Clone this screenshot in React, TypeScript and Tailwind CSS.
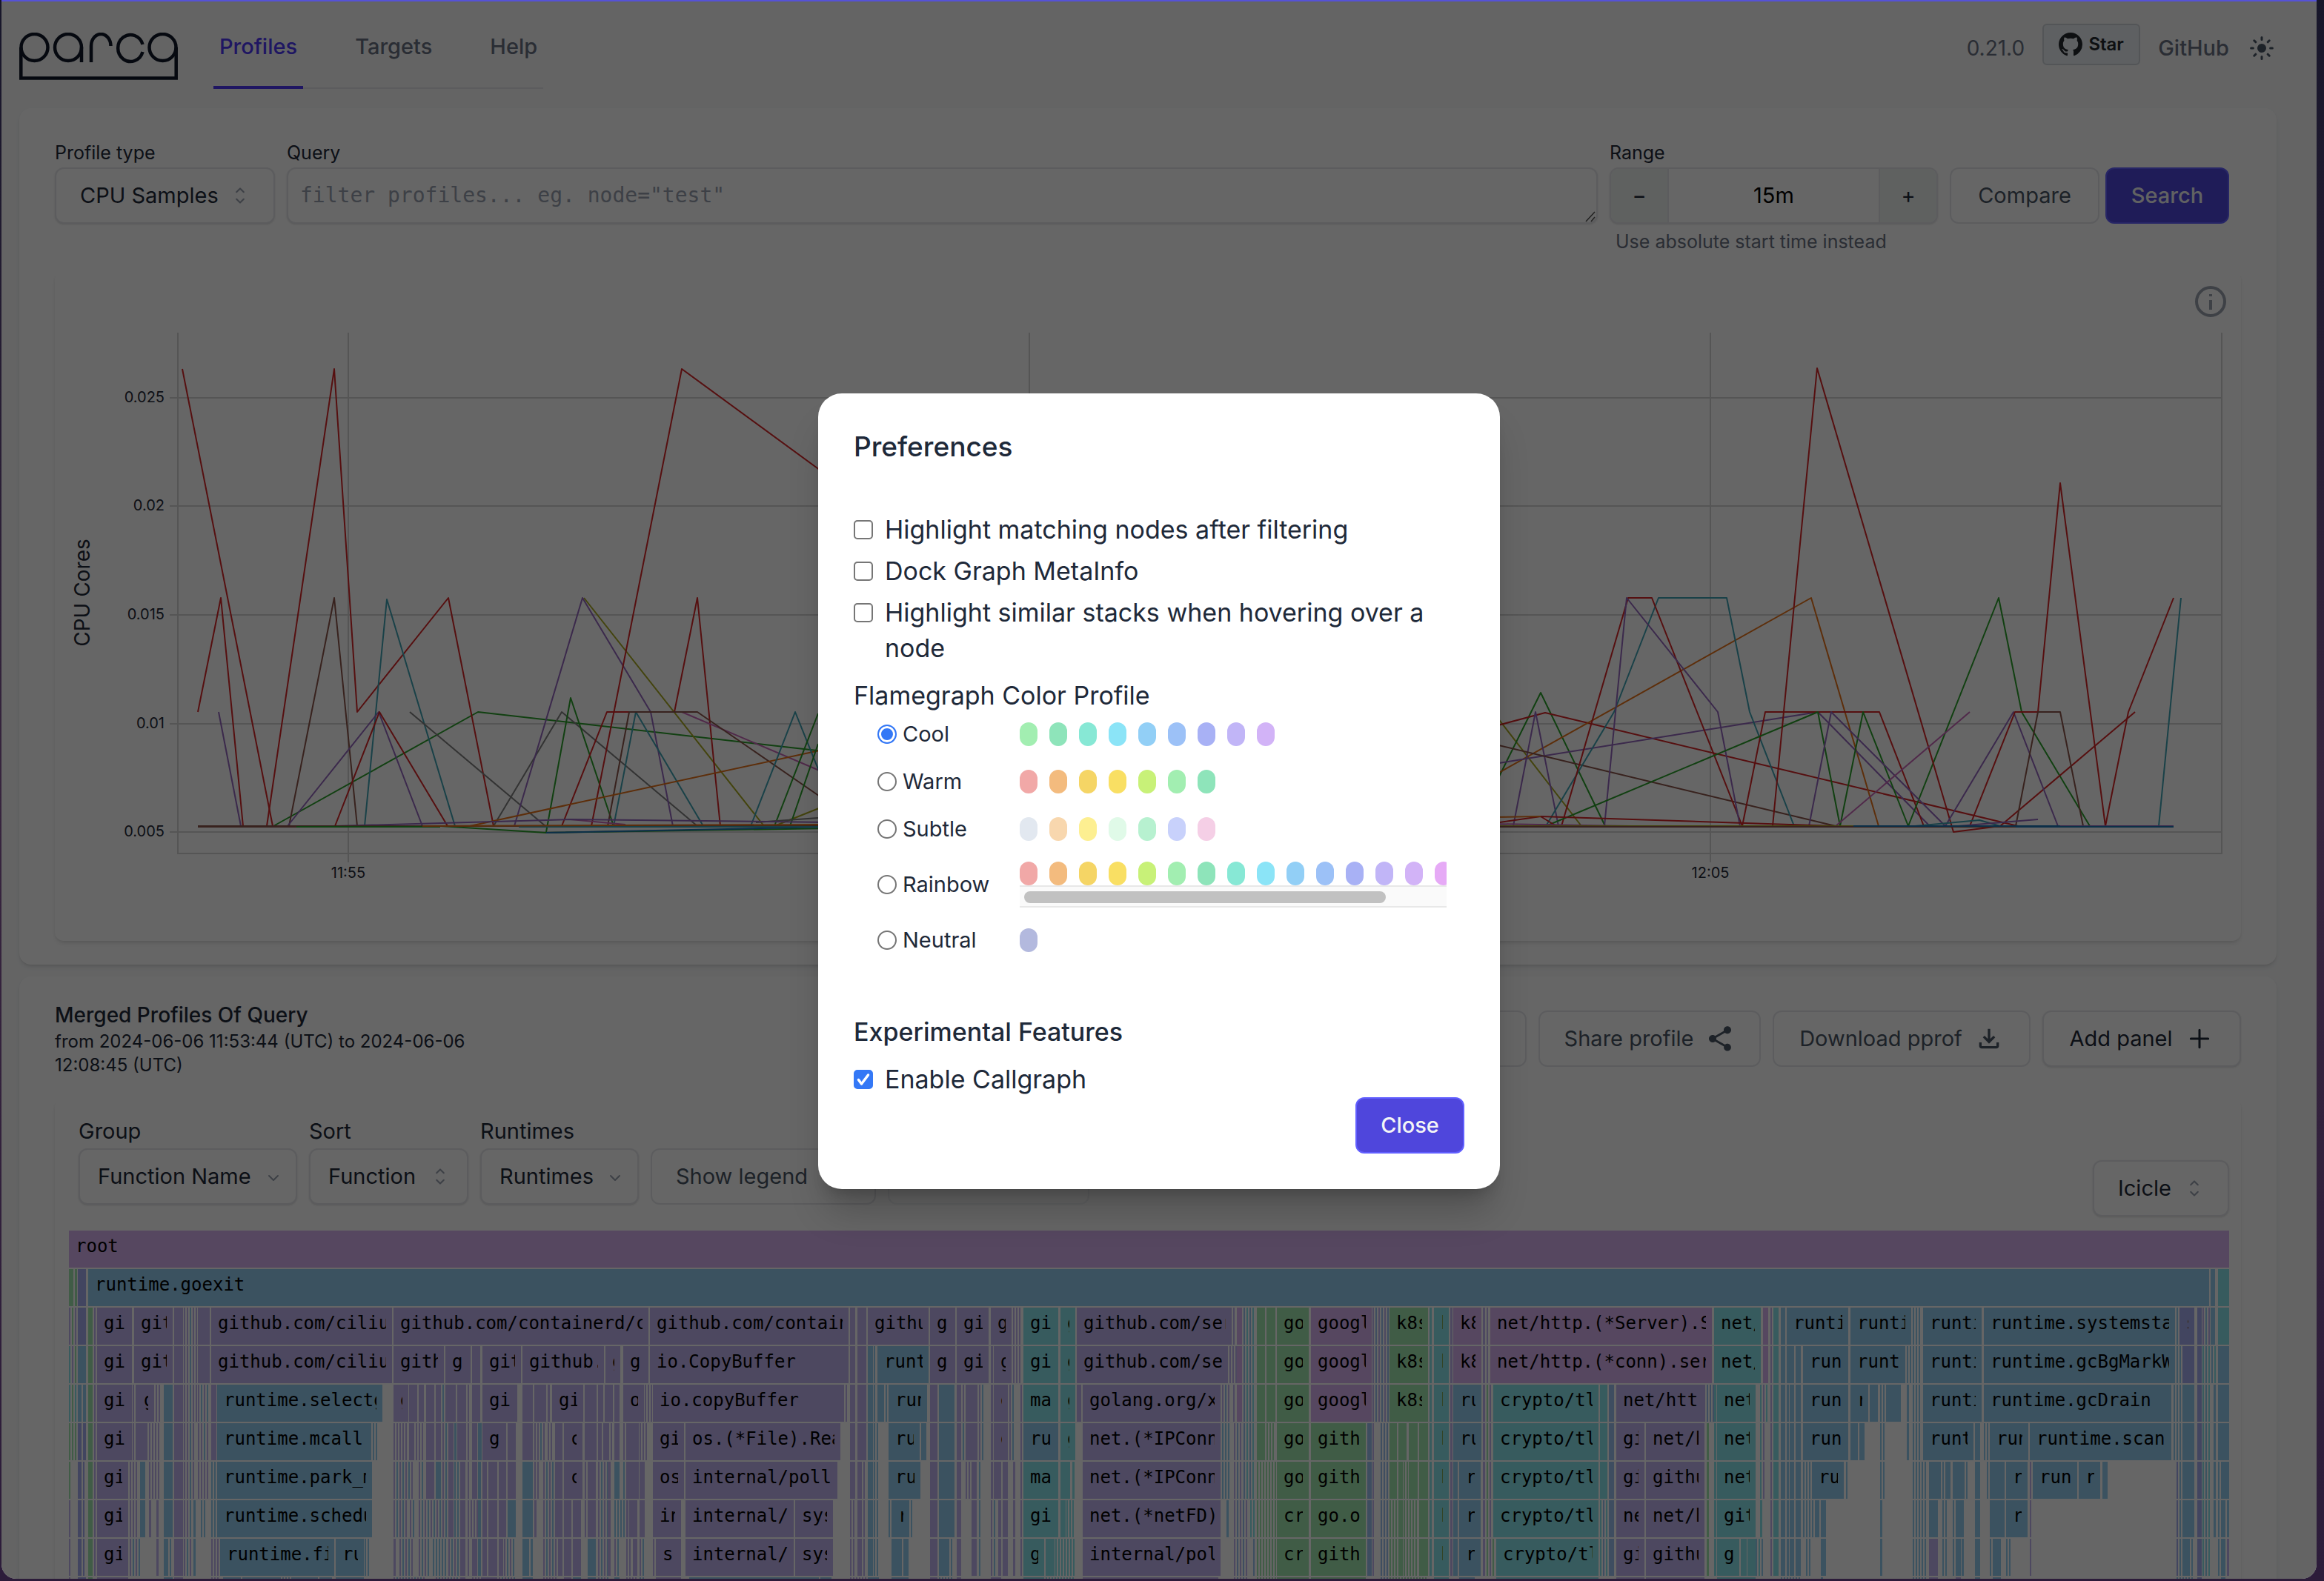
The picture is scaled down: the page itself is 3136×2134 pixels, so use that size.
import type { ReactNode } from 'react';

const SANS = "font-['Inter','Liberation_Sans',sans-serif]";

/* ---------- icons ---------- */

const ParcaLogo = () => (
  <svg viewBox="0 0 214 64" className="h-16 w-[214px] text-gray-900" fill="none" stroke="currentColor" strokeWidth="4.5" role="img" aria-label="parca">
    <circle cx="20.5" cy="20" r="18" />
    <path d="M2.3 20V61.5H211.7V20" />
    <circle cx="66" cy="20" r="18" />
    <path d="M84 20V40" />
    <path d="M97 40V18a13 15.7 0 0 1 26.500 0" />
    <path d="M166.500 16A17 18 0 1 0 166.500 26" />
    <circle cx="193.500" cy="20" r="18" />
  </svg>
);

const GithubMark = () => (
  <svg viewBox="0 0 16 16" className="size-8" fill="currentColor" aria-hidden="true">
    <path d="M8 0C3.58 0 0 3.58 0 8c0 3.54 2.29 6.53 5.47 7.59.4.07.55-.17.55-.38 0-.19-.01-.82-.01-1.49-2.01.37-2.53-.49-2.69-.94-.09-.23-.48-.94-.82-1.13-.28-.15-.68-.52-.01-.53.63-.01 1.08.58 1.23.82.72 1.21 1.87.87 2.33.66.07-.52.28-.87.51-1.07-1.78-.2-3.64-.89-3.64-3.95 0-.87.31-1.59.82-2.15-.08-.2-.36-1.02.08-2.12 0 0 .67-.21 2.2.82.64-.18 1.32-.27 2-.27.68 0 1.36.09 2 .27 1.53-1.04 2.2-.82 2.2-.82.44 1.1.16 1.92.08 2.12.51.56.82 1.27.82 2.15 0 3.07-1.87 3.75-3.65 3.95.29.25.54.73.54 1.48 0 1.07-.01 1.93-.01 2.2 0 .21.15.46.55.38A8.013 8.013 0 0016 8c0-4.42-3.58-8-8-8z" />
  </svg>
);

const SunIcon = () => (
  <svg viewBox="0 0 20 20" className="size-10" fill="currentColor" stroke="currentColor" aria-hidden="true">
    <circle cx="10" cy="10" r="3" stroke="none" />
    <path
      d="M10 2.800V4.200M10 15.800V17.200M2.800 10H4.200M15.800 10H17.200M4.900 4.900L5.900 5.900M14.100 14.100L15.100 15.100M4.900 15.100L5.900 14.100M14.100 5.900L15.100 4.900"
      strokeWidth="1.500"
      strokeLinecap="round"
    />
  </svg>
);

const UpDown = () => (
  <svg viewBox="0 0 20 20" className="size-8" fill="none" stroke="currentColor" strokeWidth="1.300" strokeLinecap="round" strokeLinejoin="round" aria-hidden="true">
    <path d="M7 7l3-3 3 3M13 13l-3 3-3-3" />
  </svg>
);

const Down = () => (
  <svg viewBox="0 0 16 16" className="size-4" fill="none" stroke="currentColor" strokeWidth="2" strokeLinecap="round" strokeLinejoin="round" aria-hidden="true">
    <path d="M2 5l6 6 6-6" />
  </svg>
);

const ShareIcon = () => (
  <svg viewBox="0 0 24 24" className="size-10" fill="currentColor" aria-hidden="true">
    <path d="M18 16.08c-.76 0-1.44.3-1.96.77L8.91 12.7c.05-.23.09-.46.09-.7s-.04-.47-.09-.7l7.05-4.11c.54.5 1.25.81 2.04.81 1.66 0 3-1.34 3-3s-1.34-3-3-3-3 1.34-3 3c0 .24.04.47.09.7L8.04 9.81C7.500 9.310 6.790 9 6 9c-1.66 0-3 1.34-3 3s1.34 3 3 3c.79 0 1.500-.31 2.040-.81l7.120 4.160c-.05.21-.08.43-.08.65 0 1.61 1.31 2.92 2.92 2.92s2.92-1.31 2.92-2.92-1.31-2.92-2.92-2.92z" />
  </svg>
);

const DownloadIcon = () => (
  <svg viewBox="0 0 24 24" className="size-10" fill="currentColor" aria-hidden="true">
    <path d="M12 16l-5-5 1.400-1.450 2.600 2.600V4h2v8.150l2.600-2.600L17 11l-5 5zm-6 4q-.825 0-1.412-.587T4 18v-3h2v3h12v-3h2v3q0 .825-.587 1.413T18 20H6z" />
  </svg>
);

const PlusIcon = () => (
  <svg viewBox="0 0 24 24" className="size-10" fill="none" stroke="currentColor" strokeWidth="1.800" strokeLinecap="round" aria-hidden="true">
    <path d="M12 5v14M5 12h14" />
  </svg>
);

/* ---------- controls ---------- */

const BOX = 'h-[76px] rounded-[12px] border-2 border-gray-200 bg-white text-[29px]';

function Select({ label, value, width, pad, double, hideLabel, small }: { label: string; value: string; width: string; pad: string; double?: boolean; hideLabel?: boolean; small?: boolean }) {
  return (
    <label className={`flex flex-col ${small ? '' : 'gap-[3px]'}`}>
      {!hideLabel && <span className={small ? 'text-[25px] leading-10' : 'text-[29px] leading-10'}>{label}</span>}
      <span className={`relative block ${width}`}>
        <select defaultValue={value} aria-label={label} className={`${BOX} w-full appearance-none shadow-sm ${pad}`}>
          <option>{value}</option>
        </select>
        <span className={`pointer-events-none absolute inset-y-0 flex items-center text-gray-400 ${double ? (small ? 'right-[31px]' : 'right-[22px]') : 'right-[24px] pt-1'}`}>
          {double ? <UpDown /> : <Down />}
        </span>
      </span>
    </label>
  );
}

function OutlineButton({ children, className = '', strong }: { children: ReactNode; className?: string; strong?: boolean }) {
  return (
    <button type="button" className={`${BOX} flex items-center justify-center ${strong ? 'text-gray-800 shadow-sm' : 'text-gray-600'} ${className}`}>
      {children}
    </button>
  );
}

/* ---------- header ---------- */

function Header() {
  return (
    <header className="flex h-[120px] justify-between pl-6 pr-[54px]">
      <div className="flex items-start gap-12">
        <div className="pt-11">
          <ParcaLogo />
        </div>
        <nav className="relative flex h-[120px] gap-[62px] border-b-2 border-gray-200 text-[29px] font-medium text-gray-500">
          <a href="#profiles" className="-mb-0.5 flex h-[120px] items-start border-b-4 border-indigo-600 px-2 pt-[43px] leading-10 text-indigo-600">Profiles</a>
          <a href="#targets" className="px-2 pt-[43px] leading-10">Targets</a>
          <a href="#help" className="px-2 pt-[43px] leading-10">Help</a>
        </nav>
      </div>
      <div className="flex items-start text-[28px] text-gray-500">
        <span className="pt-[45px] leading-10">0.21.0</span>
        <a href="#star" className="mt-8 ml-6 flex h-14 w-[132px] items-center justify-center gap-2 rounded-[6px] border-2 border-[#d0d5da] bg-[#ebf0f4] text-[24px] font-semibold text-[#24292f]">
          <GithubMark />
          Star
        </a>
        <a href="#github" className="ml-6 pt-[45px] text-[29px] leading-10 font-medium">GitHub</a>
        <button type="button" aria-label="Toggle theme" className="ml-6 mt-[45px] text-gray-600">
          <SunIcon />
        </button>
      </div>
    </header>
  );
}

/* ---------- metrics chart ---------- */

const RED = '#d62728', VIO = '#9467bd', CYA = '#3fa3b3', GRE = '#2ca02c', BRO = '#8c564b', GRA = '#7f7f7f', OLI = '#a8a922', ORA = '#e8731a', PIN = '#c868b8', BLU = '#1f77b4';

const series: [string, string][] = [
  [GRE, '369,1115 645,961 1120,1015'],
  [RED, '246,498 368,1115'],
  [RED, '267,961 298,807 328,1115'],
  [VIO, '295,961 325,1115'],
  [RED, '360,1115 451,498 482,961 605,807 666,1115'],
  [BRO, '390,1115 451,807 482,1115'],
  [CYA, '492,1115 522,809 614,1115'],
  [VIO, '388,1115 511,961 570,1115'],
  [RED, '452,1115 512,961 604,1115'],
  [GRA, '553,961 736,1115'],
  [GRA, '666,1115 758,961 941,1115'],
  [OLI, '788,807 1031,1115'],
  [OLI, '1045,1115 1120,1085'],
  [VIO, '694,1115 786,807 878,961 908,1115'],
  [GRE, '737,1123 770,942 828,1115'],
  [RED, '758,1115 819,961 910,961 941,807 972,1115'],
  [RED, '798,1115 920,498 1200,703'],
  [CYA, '828,1115 858,961 949,1115'],
  [PIN, '920,961 1115,1044'],
  [BRO, '820,1115 849,961 941,961 1115,1081'],
  [ORA, '634,1115 1115,1011'],
  [CYA, '1013,1115 1073,961 1104,1038 1130,1115'],
  [GRE, '1045,1115 1104,963'],
  [GRE, '1066,1115 1104,1004'],
  [PIN, '770,1106 844,1113'],
  [GRA, '1020,1110 1104,1104'],
  [GRE, '400,1115 594,1115 737,1124 1120,1118'],
  [BLU, '737,1124 1120,1116'],
  [VIO, '452,1115 770,1106 1120,1110'],
  [BRO, '267,1115 482,1115 1120,1115'],
  [BRO, '267,1116 482,1116'],
  [GRE, '400,1116 594,1116'],
  [CYA, '700,1116 1120,1116'],
  [ORA, '570,1115 1120,1113'],
  [OLI, '2010,955 2134,1115'],
  [GRE, '2017,1060 2079,935 2166,1115'],
  [RED, '2010,982 2085,962 2723,1115'],
  [ORA, '2010,1050 2444,807 2535,1115'],
  [VIO, '2010,1032 2453,961 2604,1115'],
  [VIO, '2042,1115 2072,961 2103,1115'],
  [BRO, '2010,1003 2477,1115'],
  [CYA, '2086,1115 2178,961 2238,807 2330,807 2361,961 2421,1115'],
  [RED, '2107,1115 2197,807 2229,807 2351,1115 2382,961 2536,961 2596,1115'],
  [VIO, '2165,1115 2195,807 2318,961 2348,1115'],
  [GRE, '2086,1115 2453,961 2483,1115 2514,961 2575,1115 2697,807 2728,961 2820,1115'],
  [RED, '2392,1115 2452,497 2636,1123 2699,1115 2881,961'],
  [VIO, '2441,1115 2471,961 2625,1115 2717,961 2777,1115'],
  [PIN, '2477,1115 2658,961'],
  [RED, '2658,1115 2719,961 2750,961 2780,652 2841,1115 2872,961 2933,807'],
  [BRO, '2720,1115 2750,961 2780,961 2811,1115'],
  [CYA, '2913,1115 2943,807'],
  [RED, '2010,1112 2079,1102 2100,1115'],
  [ORA, '2010,1103 2079,1102'],
  [RED, '2079,1102 2477,1115'],
  [CYA, '2584,1115 2671,1107 2699,1115'],
  [VIO, '2642,1115 2750,1106'],
  [PIN, '2010,1112 2200,1115'],
  [OLI, '2010,1115 2501,1115'],
  [BRO, '2010,1116 2720,1116'],
  [BLU, '2720,1116 2780,1116'],
  [BLU, '2501,1115 2780,1115'],
  [VIO, '2780,1115 2933,1115'],
  [BLU, '2780,1116 2933,1116'],
];

function Chart() {
  const yTicks: [number, string][] = [[537, '0.025'], [683, '0.02'], [830, '0.015'], [977, '0.01'], [1123, '0.005']];
  const xTicks: [number, string][] = [[470, '11:55'], [1389, '12:00'], [2308, '12:05']];
  return (
    <svg viewBox="74 366 2950 904" className="block h-auto w-full" role="img" aria-label="CPU Cores over time">
      <g stroke="#d4d4d4" strokeWidth="2" fill="none">
        {yTicks.map(([y]) => <path key={y} d={`M229 ${y}H2998`} />)}
        {xTicks.map(([x]) => <path key={x} d={`M${x} 449V1164`} />)}
        <path d="M240 449V1152H2998V449" />
      </g>
      <g fill="none" strokeWidth="2" strokeLinejoin="round">
        {series.map(([color, points], i) => <polyline key={i} stroke={color} points={points} />)}
      </g>
      <g fill="#1f2937" fontSize="20">
        {yTicks.map(([y, t]) => <text key={t} x="222" y={y + 6} textAnchor="end">{t}</text>)}
        {xTicks.map(([x, t]) => <text key={t} x={x} y="1185" textAnchor="middle">{t}</text>)}
        <text transform="translate(121 800) rotate(-90)" textAnchor="middle" fontSize="28">CPU Cores</text>
      </g>
      <g fill="none" stroke="#9ca3af" strokeWidth="4">
        <circle cx="2983" cy="407" r="19" />
        <path d="M2983 405V418M2983 397V400" strokeWidth="4" />
      </g>
    </svg>
  );
}

function QueryCard() {
  return (
    <section className="mt-[26px] mr-[54px] ml-6 rounded-[16px] bg-white px-12 pt-10 pb-8 shadow-md">
      <div className="flex items-start pr-4 text-gray-800">
        <Select label="Profile type" value="CPU Samples" width="w-[297px]" pad="pl-8" double small />
        <label className="ml-4 flex grow flex-col">
          <span className="text-[25px] leading-10">Query</span>
          <span className="relative block">
            <textarea
              rows={1}
              placeholder={'filter profiles... eg. node="test"'}
              className="block h-[76px] w-full resize-none overflow-hidden rounded-[12px] border-2 border-gray-200 bg-white px-4 py-4 font-['DejaVu_Sans_Mono',monospace] text-[28px] leading-10 shadow-sm placeholder:text-gray-400"
            />
            <svg viewBox="0 0 16 16" className="pointer-events-none absolute right-[2px] bottom-[2px] size-4" stroke="#555" strokeWidth="1.500" aria-hidden="true">
              <path d="M2 15L14 2M9 15L14 9" />
            </svg>
          </span>
        </label>
        <div className="ml-4 flex flex-col">
          <label htmlFor="range" className="text-[25px] leading-10">Range</label>
          <div className={`${BOX} flex w-[443px] overflow-hidden shadow-sm`}>
            <button type="button" aria-label="Decrease range" className="w-[78px] border-r-2 border-gray-200 bg-[#eef2f0]">−</button>
            <input id="range" type="text" defaultValue="15m" className="w-0 grow text-center text-black" />
            <button type="button" aria-label="Increase range" className="w-[78px] border-l-2 border-gray-200 bg-[#eef2f0]">+</button>
          </div>
          <a href="#absolute" className="mt-2 pl-2 text-[25px] leading-8 text-gray-500">Use absolute start time instead</a>
        </div>
        <OutlineButton className="mt-10 ml-4 w-[202px]">Compare</OutlineButton>
        <button type="button" className="mt-10 ml-2 h-[76px] w-[167px] rounded-[12px] border-2 border-indigo-500 bg-[#4f46dc] text-[29px] font-medium text-gray-100">Search</button>
      </div>
      <div className="mt-6 rounded-[12px] shadow-md">
        <Chart />
      </div>
    </section>
  );
}

/* ---------- icicle graph ---------- */

const fills: Record<string, string> = { p: '#d8b2f0', b: '#94cdf0', v: '#c1b4f0', g: '#a0e6af', t: '#8ae3ec', i: '#a5adf0', n: '#9cc0f0' };

/*
 * Frames are listed per depth, in four slices of the x axis.
 * "v146-244 gi" is one frame: colour, start, end and its label.
 * "/vb388-424" is a run of hairline frames that cycles through the colours.
 */
const slices: { origin: number; scale: number; rows: string[] }[] = [
  {
    origin: 60,
    scale: 2.063,
    rows: [
      'g68-80;g84-90;i93-116',
      '/vg68-90;i93-116;g122-134;v138-143;v146-244 gi;v250-356 git;v361-385;/vvb388-424;v428-460;v464-967 github.com/cilium;v972-1681 github.com/containerd/c',
      '/tvg68-90;b93-116;g122-134;v138-143;v146-244 gi;v250-356 git;v361-385;/vvb388-424;v428-460;v464-967 github.com/cilium;v972-1112 gith;v1116-1186 g;v1190-1214;v1219-1327 git;v1331-1558 github.;v1562-1603 g',
      '/tg68-90;b93-104;b108-116;g122-134;v138-143;v146-244 gi;/v246-256;v258-306 g;/v310-326;b332-356;v361-385;/vvb388-424;/vb428-460;v464-478;b481-941 runtime.selectg;v972-1012 g;v1016-1038;v1042-1056;v1062-1086;v1090-1104;b1107-1112;v1116-1145;v1149-1173;/v1177-1186;v1190-1214;v1219-1316 gi;v1331-1360;v1364-1396;v1400-1406;v1413-1499 gi;v1503-1537;v1541-1555;v1560-1568',
      '/g68-90;i93-104;i108-116;g122-134;v138-143;v146-244 gi;/v246-256;v258-287;/v291-324;b332-356;v361-385;/vvb388-418;/vvb428-460;v464-478;b481-910 runtime.mcall;/b913-928;/v972-1012;v1016-1030;/v1034-1058;v1062-1086;v1090-1104;/vb1107-1120;v1124-1138;b1141-1147;v1149-1173;/v1177-1186;v1190-1204;b1207-1217;v1219-1285 g;v1289-1313;v1331-1360;/vvb1364-1396;/v1400-1418;v1422-1442;v1446-1498 c;v1503-1537;v1541-1552;v1556-1568',
      'g68-72;i93-104;/i108-116;g122-134;v138-143;v146-234 gi;/v237-262;b266-281;/v291-318;b332-356;v361-385;/vvb388-418;/v428-460;/b464-478;b481-912 runtime.park_m;/vb972-1030;/vb1042-1058;v1062-1086;b1090-1104;/vb1107-1120;v1124-1138;/b1141-1153;v1157-1172;/v1177-1186;v1190-1204;b1207-1215;v1219-1232;v1236-1260;v1265-1285;v1289-1313;b1331-1360;/v1364-1376;/vb1388-1418;v1422-1442;v1446-1498 c;v1503-1509;v1512-1535;/vb1541-1568',
      'v68-72;i93-104;/i108-116;g122-134;v138-143;v146-234 gi;/v237-262;b266-281;v291-297;v312-318;b332-356;v361-385;/vvb388-406;b415-420;/b435-450;/b464-478;b481-912 runtime.schedu;/vb972-1008;/vb1018-1030;/vb1042-1120;v1124-1138;/b1141-1153;v1157-1172;/v1177-1206;b1207-1215;v1219-1232;v1236-1260;v1265-1285;b1289-1313;b1331-1360;v1364-1370;/vb1388-1418;v1422-1442;v1446-1466;v1470-1494;v1503-1509;v1512-1535;/vb1541-1568',
      'v68-72;i93-104;/i108-116;g122-134;v138-143;v146-234 gi;/vb237-264;v312-318;b332-345;/b349-356;v361-385;/vb388-406;b415-420;/v464-487;b489-807 runtime.fi;b811-889 ru;/b892-904;v972-977;/vb988-1030;/vb1042-1070;/b1080-1116;/vb1124-1153;v1157-1172;/v1177-1186;v1190-1204;b1207-1215;v1219-1232;v1236-1260;v1265-1276;/vb1280-1310;b1331-1350;b1354-1360;/vb1388-1426;v1430-1442;v1446-1466;v1470-1494;b1512-1535;/vb1541-1568',
      'v68-72;i93-116;g122-134;v146-234;b332-356;v361-385;/v464-487;b497-547;b551-658;/b662-690;b692-762;b766-800;b811-889;/vb972-1060;/vb1090-1153;v1157-1172;/v1190-1217;v1219-1260;/vb1265-1310;b1331-1360;/v1388-1426;v1446-1466;b1470-1494;b1512-1535;/vb1541-1568',
    ],
  },
  {
    origin: 820,
    scale: 2.063,
    rows: [
      '',
      'v118-671 github.com/contain;v675-690;v695-719;v724-893 githu;v897-968 g;v972-1061 gi;v1067-1124 g;/v1128-1152;t1157-1255 gi;t1261-1302 g;v1306-1738 github.com/ser',
      'v43-113 g;v118-671 io.CopyBuffer;v675-690;v695-719;b724-738;/b740-748;b750-893 runt;v897-968 g;v972-1061 gi;v1067-1072;v1075-1124 g;/v1128-1152;t1157-1255 gi;t1261-1302 g;v1306-1727 github.com/se',
      'v0-14;v18-33;v43-101 o;/v104-124;v126-659 io.copyBuffer;v662-667;v675-690;v695-719;b724-738;/b740-748;b750-770;b773-778;b782-889 run;v897-918;b922-966;v972-985;v988-993;v997-1030;/vb1034-1048;v1067-1072;v1075-1115 g;/vb1118-1134;v1149-1154;t1157-1255 ma;t1261-1302 g;v1306-1318;v1322-1706 golang.org/x',
      '/v0-16;v18-33;v43-48;v52-86;/v89-110;v126-213 gi;v217-648 os.(*File).Rea;v675-690;v695-719;b724-738;/b740-755;b782-869 ru;b873-887;v897-918;b922-966;v972-985;b988-993;v997-1030;/vb1034-1048;v1067-1072;v1075-1115 g;/vb1118-1134;v1149-1154;b1157-1255 ru;t1261-1302 g;v1322-1706 net.(*IPConn',
      'v0-8;b19-33;b43-48;v52-86;v89-103;v126-213 os;v217-640 internal/poll;v675-690;v695-707;/vb711-719;b724-738;/b740-755;b782-871 ru;v897-918;b922-966;v972-985;/v997-1010;v1013-1028;/b1034-1040;v1067-1072;v1075-1095;v1100-1114;v1128-1134;v1149-1154;t1157-1255 ma;t1261-1288;t1293-1299;v1322-1706 net.(*IPConn',
      'v0-8;/b19-48;v52-57;v60-82;v89-103;v126-204 in;v217-518 internal/;v522-628 sys;/v675-688;v695-707;/vb711-719;b724-738;/b740-755;b782-787;b790-840 r;/b843-850;v897-918;b922-966;v972-985;v1013-1028;/b1034-1040;/vb1067-1083;v1087-1095;v1100-1114;v1128-1134;v1149-1154;t1157-1255 gi;t1261-1274;/t1276-1300;v1322-1706 net.(*netFD)',
      'v0-8;/vb19-32;/v52-68;v70-82;/vb89-103;/v126-132;v134-204 s;v217-518 internal/;v522-628 sys;/v675-688;v695-707;/vb711-719;b724-738;/b740-755;b790-820;b823-838;v897-918;b922-952;/b955-963;v972-985;v1013-1028;/b1034-1040;/vb1067-1083;v1087-1095;v1100-1114;v1128-1134;v1149-1154;t1157-1216 g;t1219-1243;/t1247-1300;v1322-1706 internal/pol',
      'b19-32;/v52-82;/b89-103;v134-204;b226-587;b592-624;/v675-719;b724-755;b790-838;v897-918;/b922-963;v972-985;v1067-1095;t1157-1216;/t1219-1300;v1322-1700',
    ],
  },
  {
    origin: 1580,
    scale: 2.063,
    rows: [
      '',
      '/v173-182;p184-199;/nt203-236;g240-262;g266-290;g295-383 go;p390-559 googl;/vn562-606;g609-716 k8s;t720-727;t732-774 k;v778-783;p786-864 k8;v868-874;/vg878-888;p890-1506 net/http.(*Server).S;t1512-1642 net/',
      '/v162-182;p184-199;/nt203-236;g240-262;g266-290;g295-383 go;p390-559 googl;/vn562-606;g609-716 k8s;t720-727;t732-774 k;v778-783;p786-864 k8;v868-874;/vg878-888;p890-1506 net/http.(*conn).ser;t1512-1642 net/',
      '/vn142-160;/v173-182;p184-199;/nt203-236;g240-262;g266-290;g295-383 go;p390-559 googl;/vn562-606;g609-716 k8s;t720-727;t732-774 k;v778-783;b786-864 ru;v868-874;/gv878-894;t897-1190 crypto/tl;t1195-1216;n1219-1234;v1240-1487 net/htt;/n1492-1510;t1513-1518;t1521-1628 net',
      '/b142-160;/vn175-200;/nt203-236;g240-262;/g266-290;g295-383 go;g390-543 gith;n547-560;/v562-568;/n584-606;g609-630;g634-657;g662-687;g691-716;t720-727;t732-774 k;v778-783;b786-864 ru;v868-874;/gv878-894;t897-1190 crypto/tl;t1195-1216;n1219-1234;v1240-1318 gi;v1322-1485 net/h;g1492-1497;t1513-1518;t1521-1628 net',
      '/b142-160;/vn175-200;/nt203-236;/g240-290;g295-383 go;g390-543 gith;n547-560;/v562-568;/n584-606;g609-630;g634-645;/g648-658;g662-687;g691-716;t720-727;t732-774 k;v778-783;b786-798;b802-862 r;v868-874;/gv878-894;t897-1190 crypto/tl;t1195-1216;n1219-1234;v1240-1318 gi;v1322-1485 githu;g1492-1497;t1513-1518;t1521-1628 net',
      'b155-160;/vn175-215;/t220-236;/g240-290;g295-383 cr;g390-543 go.o;n547-560;/v562-568;/n584-606;/g609-630;g634-645;/g648-687;g691-716;t720-727;t732-774 k;v778-783;b786-798;b802-862 r;v868-874;/gv878-894;t897-1190 crypto/tl;/tn1195-1216;n1219-1234;v1240-1318 ne;v1322-1485 net/h;g1492-1497;t1513-1518;t1521-1628 git',
      '/vn175-215;/nt230-236;/g240-290;g295-383 cr;g390-543 gith;n547-560;/v562-568;/n584-606;/g609-630;g634-645;/g648-687;g691-716;t720-727;t732-774 k;v778-783;b786-798;b802-862 r;v868-874;/gv878-904;t906-1190 crypto/tl;/tn1195-1216;n1219-1234;v1240-1318 gi;v1322-1485 githu;g1492-1497;t1513-1518;t1521-1583 g;t1586-1603;t1606-1628',
      '/vn175-215;/g240-290;g295-383;g390-543;/n584-606;/g609-716;t732-774;b802-845;t906-1190;v1240-1318;v1322-1485;t1521-1628',
    ],
  },
  {
    origin: 2340,
    scale: 1.97,
    rows: [
      'b1267-1279;t1286-1316',
      'p77-91;/v96-102;t104-118;b124-136;b140-303 runti;b309-470 runti;/b474-498;b502-657 runti;b664-1172 runtime.systemsta;/b1176-1182;i1184-1223 s;i1231-1243;/vb1246-1262;b1267-1279;t1286-1316',
      'p77-91;/v96-102;t104-118;b124-136;b140-160;b163-178;b183-303 run;b309-455 runt;/b459-498;b502-657 runti;b664-1172 runtime.gcBgMarkW;/b1176-1190;i1192-1223;i1231-1243;/tb1246-1280;b1286-1316',
      '/tv69-91;/v96-102;t104-118;b124-136;b140-145;b148-160;b163-178;b183-303 run;b309-357 r;b361-383;/b388-400;b404-443;b459-465;/b475-498;b502-657 runti;b664-1163 runtime.gcDrain;/b1168-1190;b1192-1223;i1231-1243;/tb1246-1262;b1274-1280;b1286-1316',
      '/tv69-82;/v96-102;t104-118;b124-136;b140-145;b148-160;b163-178;b183-303 run;b309-329;b333-347;/b388-402;b459-465;/b475-498;b502-636 runt;b640-654;/b664-677;b680-782 run;b786-1163 runtime.scan;/b1168-1190;b1192-1223;i1231-1243;/tb1246-1262;b1274-1280;b1286-1316',
      '/tv69-82;/v96-102;t104-118;b124-136;b140-145;b148-160;b163-178;/b183-203;b207-292 ru;b297-302;/b388-402;/b475-515;b518-550;b554-558;b561-575;b581-613;b617-621;b640-654;b672-676;b680-719;b723-780 r;v786-790;b794-912 run;b916-973 r;b979-993;/ib1176-1190;b1192-1223;i1231-1243;/tb1246-1262;b1274-1280;b1286-1291;b1294-1316',
      't69-74;/v96-102;t104-118;b124-136;b140-145;b148-160;b163-178;/b183-210;b215-227;b230-244;b388-394;/b475-515;b518-541;/b554-566;b581-585;b589-611;b640-654;b680-719;b723-780 r;v786-790;/ib1176-1190;b1192-1223;i1231-1243;/tb1246-1262;b1274-1280;b1286-1291;b1294-1306;b1310-1315',
      '/bt57-74;/v96-102;t104-118;b124-136;b140-145;b148-160;b163-178;/b191-204;b230-244;b388-394;/b475-515;v518-541;/b554-566;b581-585;b589-602;b605-610;b640-654;b680-684;b687-709;/b723-736;v786-790;/ib1176-1190;b1192-1211;b1215-1220;i1231-1243;/tb1246-1262;b1286-1291;b1294-1306;v1310-1315',
      't0-54;/b124-178;b230-236;/b475-515;v518-541;v589-602;b640-654;b687-709;/b1176-1220;i1231-1243;b1294-1306',
    ],
  },
];

type Frame = { x: number; y: number; w: number; fill: string; label?: string };

function buildFrames(): Frame[] {
  const out: Frame[] = [
    { x: 93, y: 0, w: 2915, fill: fills.p, label: 'root' },
    { x: 119, y: 52, w: 2862, fill: fills.b, label: 'runtime.goexit' },
  ];
  for (const { origin, scale, rows } of slices) {
    rows.forEach((row, depth) => {
      const y = (depth + 1) * 52;
      for (const item of row.split(';')) {
        const m = /^(\/?)([a-z]+)(\d+)-(\d+)(?: (.*))?$/.exec(item);
        if (!m) continue;
        const start = Math.round(origin + Number(m[3]) / scale);
        const end = Math.round(origin + Number(m[4]) / scale);
        if (m[1]) {
          for (let x = start, n = 0; x < end; x += 4, n += 1) {
            out.push({ x, y, w: 2, fill: fills[m[2][n % m[2].length]] });
          }
        } else {
          out.push({ x: start, y, w: Math.max(2, end - start), fill: fills[m[2]], label: m[5] });
        }
      }
    });
  }
  return out;
}

const frames = buildFrames();

function Icicle() {
  return (
    <svg viewBox="93 0 2915 518" className="block h-auto w-full font-['DejaVu_Sans_Mono',monospace]" fontSize="24" role="img" aria-label="Icicle graph">
      {frames.map((f, i) => (
        <g key={i}>
          <rect x={f.x} y={f.y} width={f.w} height="50" fill={f.fill} />
          {f.label && (
            <svg x={f.x + 9} y={f.y} width={Math.max(2, f.w - 17)} height="50">
              <text x="0" y="29" fill="#000">{f.label}</text>
            </svg>
          )}
        </g>
      ))}
    </svg>
  );
}

function ProfileCard() {
  return (
    <section className="mt-4 mr-[54px] ml-6 rounded-[16px] bg-white px-12 pt-8 pb-8 text-gray-800 shadow-md">
      <div className="flex items-start justify-between">
        <div className="w-[600px]">
          <h2 className="text-[28px] leading-10 font-medium">Merged Profiles Of Query</h2>
          <p className="text-[24px] leading-8">from 2024-06-06 11:53:44 (UTC) to 2024-06-06 12:08:45 (UTC)</p>
        </div>
        <div className="flex gap-4 pt-[14px]">
          <button type="button" aria-label="Reset view" className={`${BOX} w-[200px]`} />
          <OutlineButton className="w-[300px] gap-4">Share profile <ShareIcon /></OutlineButton>
          <OutlineButton className="w-[348px] gap-4">Download pprof <DownloadIcon /></OutlineButton>
          <OutlineButton strong className="w-[268px] gap-4">Add panel <PlusIcon /></OutlineButton>
        </div>
      </div>
      <div className="mt-[29px] rounded-[12px] pt-6 shadow-md">
        <div className="flex items-end justify-between pr-4 pl-8">
          <div className="flex items-end gap-4 pb-4">
            <Select label="Group" value="Function Name" width="w-[295px]" pad="pl-6" />
            <Select label="Sort" value="Function" width="w-[215px]" pad="pl-6" double />
            <Select label="Runtimes" value="Runtimes" width="w-[214px]" pad="pl-6" />
            <OutlineButton className="w-[304px] !justify-start pl-8">Show legend</OutlineButton>
            <button type="button" aria-label="Reset graph" className={`${BOX} w-[272px] opacity-50`} />
          </div>
          <Select label="Visualization" value="Icicle" width="w-[184px]" pad="pl-8" double hideLabel small />
        </div>
        <div className="mt-[19px] mr-4 ml-[19px]">
          <Icicle />
        </div>
      </div>
    </section>
  );
}

/* ---------- preferences dialog ---------- */

function CheckRow({ id, label, checked }: { id: string; label: string; checked?: boolean }) {
  return (
    <div className="flex items-start gap-4">
      <span className="relative mt-[11px] block size-[26px] shrink-0">
        <input
          id={id}
          type="checkbox"
          defaultChecked={checked}
          className="block size-[26px] appearance-none rounded-[5px] border-2 border-[#767676] bg-white checked:border-[#3478f6] checked:bg-[#3478f6]"
        />
        {checked && (
          <svg viewBox="0 0 26 26" className="pointer-events-none absolute inset-0" fill="none" stroke="#fff" strokeWidth="3.500" strokeLinecap="round" strokeLinejoin="round" aria-hidden="true">
            <path d="M6.500 13.500L10.500 19L19.500 7" />
          </svg>
        )}
      </span>
      <label htmlFor={id} className="max-w-[750px] text-[34px] leading-[48px]">{label}</label>
    </div>
  );
}

const rainbow = ['#f1a8a7', '#f3bb7e', '#f5d565', '#f9df63', '#c8f178', '#a2eeb1', '#8ee4ba', '#87e8d5', '#8be4f7', '#92cff6', '#9cc1f7', '#a8b1f5', '#c1b5f7', '#d2b3f7', '#e6aaf6', '#f0abfc', '#f9a8d4'];

const palettes: { name: string; colors: string[] }[] = [
  { name: 'Cool', colors: rainbow.slice(5, 14) },
  { name: 'Warm', colors: rainbow.slice(0, 7) },
  { name: 'Subtle', colors: ['#e2e8f0', '#f8d7ae', '#fdef91', '#e0fae8', '#b7f1d0', '#c8d1fb', '#f5cfe6'] },
  { name: 'Rainbow', colors: rainbow },
  { name: 'Neutral', colors: ['#b3b9de'] },
];

function Preferences() {
  return (
    <div role="dialog" aria-modal="true" aria-labelledby="prefs" className="w-[920px] rounded-[32px] bg-white p-12 text-gray-800 shadow-[0_40px_50px_-10px_rgba(0,0,0,0.2),0_16px_20px_-12px_rgba(0,0,0,0.2)]">
      <h1 id="prefs" className="text-[37px] leading-[48px] font-medium">Preferences</h1>
      <div className="mt-16 flex flex-col gap-2">
        <CheckRow id="c1" label="Highlight matching nodes after filtering" />
        <CheckRow id="c2" label="Dock Graph MetaInfo" />
        <CheckRow id="c3" label="Highlight similar stacks when hovering over a node" />
      </div>
      <fieldset className="mt-5 min-w-0">
        <legend className="text-[34px] leading-10">Flamegraph Color Profile</legend>
        {palettes.map(({ name, colors }) => (
          <div key={name} className="flex items-center py-3 pl-8 pr-6">
            <label className="flex h-10 w-[192px] shrink-0 items-center gap-2 text-[29px]">
              <input
                type="radio"
                name="palette"
                defaultChecked={name === 'Cool'}
                className="size-[26px] appearance-none rounded-full border-2 border-[#767676] bg-white checked:border-[#3478f6] checked:bg-[#3478f6] checked:shadow-[inset_0_0_0_3px_#fff]"
              />
              {name}
            </label>
            <div className="min-w-0 grow overflow-hidden">
              <div className="flex gap-4">
                {colors.map((c) => (
                  <span key={c} className="h-8 w-6 shrink-0 rounded-full" style={{ backgroundColor: c }} />
                ))}
              </div>
              {name === 'Rainbow' && (
                <div className="border-y-2 border-[#e8e8e8] bg-[#fafafa] px-[6px] pt-[6px] pb-1">
                  <div className="h-4 w-[488px] rounded-full bg-[#c1c1c1]" />
                </div>
              )}
            </div>
          </div>
        ))}
      </fieldset>
      <h2 className="mt-[68px] text-[34px] leading-[48px] font-medium">Experimental Features</h2>
      <div className="mt-4">
        <CheckRow id="c4" label="Enable Callgraph" checked />
      </div>
      <div className="flex justify-end">
        <button type="button" className="h-[76px] w-[147px] rounded-[12px] border-2 border-indigo-500 bg-[#4f46dc] text-[29px] font-medium text-gray-100">Close</button>
      </div>
    </div>
  );
}

export default function App() {
  return (
    <div className={`h-screen overflow-hidden bg-linear-to-b from-[#17162a] via-[#37253e] to-[#2c1c3a] pr-[10px] pb-[3px] pl-[2px] ${SANS}`}>
      <div className="relative h-full overflow-hidden rounded-b-[20px] bg-gray-50">
        <Header />
        <QueryCard />
        <ProfileCard />
        <div className="absolute inset-0 grid place-items-center bg-black/60 pt-1">
          <Preferences />
        </div>
        <div className="absolute inset-x-0 top-0 h-0.5 bg-[#5552d6]" />
      </div>
    </div>
  );
}
